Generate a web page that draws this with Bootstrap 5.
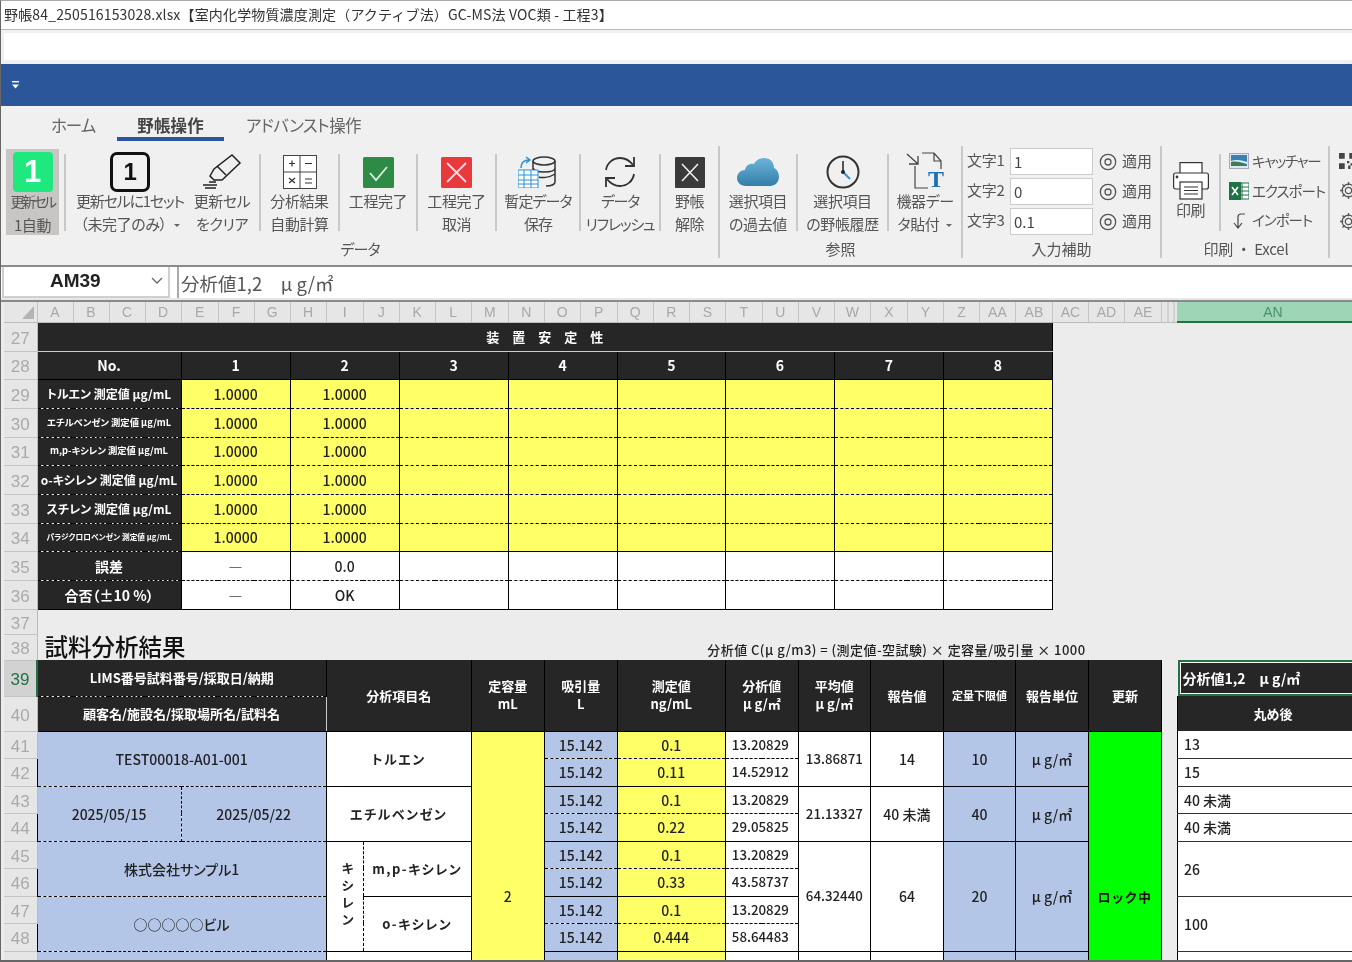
<!DOCTYPE html>
<html lang="ja">
<head>
<meta charset="utf-8">
<title>野帳</title>
<link href="https://cdn.jsdelivr.net/npm/bootstrap@5.3.0/dist/css/bootstrap.min.css" rel="stylesheet">
<style>
html,body{height:962px;overflow:hidden;background:#fff}
body{font-family:"Noto Sans CJK JP","Noto Sans",sans-serif;font-feature-settings:"palt";color:#222}
.xa{width:1352px;height:962px;overflow:hidden;border-left:1px solid #666;border-top:1px solid #aaa;border-bottom:2px solid #666;background:#ececec;filter:blur(.3px)}
.xa>*{flex:none}
.xa-title{height:29px;background:#fff;border-bottom:1px solid #bbb;font-size:14px;line-height:27px;padding-left:3px;white-space:nowrap;color:#333;font-feature-settings:normal;letter-spacing:.16px}
.xa-search{height:34px;background:#f0f0f0;padding:3px 0 3px 3px}
.xa-search div{height:27px;background:#fff;border-radius:2px}
.xa-blue{height:42px;background:#2b579a;padding-left:10px}
.xa-tabs{height:37px;background:#f0f0f0;padding-left:28px}
.xa-tabs .nav-link{height:35px;padding:7px 22px 0;font-size:16.500px;line-height:24px;color:#666;border-bottom:4px solid transparent;background:none;letter-spacing:-.6px}
.xa-tabs .nav-link.hm{letter-spacing:-1px}
.xa-tabs .nav-link.active{color:#444;font-weight:700;border-bottom-color:#2b579a;padding:7px 20px 0;letter-spacing:.2px}
.xa-rib{height:124px;background:#f0f0f0;padding:3px 0 0 5px;border-bottom:2px solid #8a8a8a;overflow:hidden;font-size:15px;color:#555}
.xa-rib>*{flex:none}
.rg-lab{height:30px;line-height:28px;font-size:15px;text-align:center;color:#555;white-space:nowrap}
.rg-lab.ka{letter-spacing:-1px;padding-right:4px}
.rg-lab.pr{font-feature-settings:normal;letter-spacing:-.2px;padding-left:2px}
.rg-sep{width:2px;height:112px;background:#c8c8c8}
.ri-sep{width:2px;height:77px;margin-top:8px;background:#c8c8c8;flex:none}
.ritem{flex:none;height:86px;margin-top:3px;display:flex;flex-direction:column;align-items:center;line-height:23px;white-space:nowrap;text-align:center;letter-spacing:-.4px}
.ritem.on{background:#c8c6c4}
.ricon{height:40px;margin-top:3px;display:flex;align-items:center;justify-content:center;flex:none;margin-bottom:-3px}
.w53{width:53px}.w128{width:128px}.w56{width:56px}.w77{width:77px}.w76{width:76px}.w82{width:82px}.w78{width:78px}.w57{width:57px}.w89{width:89px}.w72{width:72px}
.m5{margin-left:5px}.m9{margin-left:9px}
.ls1{letter-spacing:-1.200px}.ls2{letter-spacing:-1.300px}.ls3{letter-spacing:-2.600px;font-size:14px}.ls4{letter-spacing:-.9px}
.mt12{margin-top:12px}
.gr1{width:712px}.gr2{width:241px}.gr3{width:197px}.gr4{width:166px}
.caret-mini{display:inline-block;border:3px solid transparent;border-top:3px solid #666;border-bottom:0;vertical-align:middle;margin-left:7px}
.one-g{width:40px;height:40px;border-radius:4px;background:#1ee87e;color:#fff;font:700 31px/40px "Liberation Sans",sans-serif;text-align:center}
.one-k{width:40px;height:40px;border:3px solid #111;border-radius:7px;color:#111;font:700 24px/34px "Liberation Sans",sans-serif;text-align:center}
.ri3{height:89px;padding-top:2px;padding-left:4px;gap:3px}
.ri3row{height:27px;gap:3px;font-size:15px;white-space:nowrap}
.ri3row .form-control{width:83px;height:27px;padding:2px 3px;font-size:15px;border:1px solid #ccc;border-radius:0;color:#444;background:#fff;min-height:0}
.ri3lab{width:40px;letter-spacing:-.2px;padding-bottom:3px}
.ri3ap{margin-left:3px;gap:5px}
.rlist{height:89px;padding:0 0 0 8px;font-size:14.500px;white-space:nowrap;width:107px}
.rlist div{height:30px;gap:3px}
.rl1{letter-spacing:-1.300px}.rl2{letter-spacing:-1px}
.rg5{gap:12px;margin-left:9px;padding-top:7px}
.xa-fx{height:31px;background:#fff}
.nbox{width:168px;height:31px;margin-left:1px;border:2px solid #cfcfcf;border-top:0;background:#fff;font-size:19px;font-weight:700;font-family:"Liberation Sans",sans-serif;color:#222;padding-left:46px;line-height:27px;position:relative}
.fbox{margin-left:7px;flex:1;height:31px;border-left:2px solid #aaa;font-size:18.500px;line-height:33px;padding-left:2px;color:#555;white-space:nowrap;overflow:hidden}
.nchev{position:absolute;right:5px;top:10px}
.xa-gap{height:2px;background:#e8e8e8}
.xa-sheet{height:660px;overflow:hidden;border-top:2px solid #8a8a8a;padding-left:3px;position:relative}
.xt.table{width:1364px;table-layout:fixed;margin:0;border-collapse:collapse;--bs-table-bg:transparent;font-size:14px;font-weight:500;color:#222}
.xt.table>:not(caption)>*>*{padding:0;border-width:0;box-shadow:none;text-align:center;vertical-align:middle;white-space:nowrap;overflow:hidden;line-height:1;background:transparent;color:#222}
.c-rh{width:33px}.c36{width:36px}.c37{width:37px}.c-gap{width:16px}.c-an{width:190px}
.rh20{height:20px}.h29{height:29px}.h28{height:28px}.h27{height:27px}.h26{height:26px}.h25{height:25px}.h36{height:36px}.h35{height:35px}
.xt.table>thead th{background:#e6e6e6;color:#a8a8a8;font-weight:400;font-size:14px;font-family:"Liberation Sans",sans-serif;border-right:1px solid #c4c4c4;border-bottom:1px solid #bbb}
.xt.table>thead th.an{background:#9fd5b7;color:#4c8f70;border-bottom:2px solid #217346;border-right:0}
.xt.table>thead th.nar{background:repeating-linear-gradient(90deg,#e6e6e6 0 5px,#bbb 5px 6px)}
.xt.table>tbody th{background:#e6e6e6;color:#aaa;font-weight:400;font-size:17px;font-family:"Liberation Sans",sans-serif;border-right:1px solid #bbb;border-bottom:1px solid #c4c4c4;padding-top:3px;padding-left:0;vertical-align:middle}
.xt.table>tbody th.sel{background:#d2d2d2;color:#217346;border-right:2px solid #217346}
.xt.table>tbody td.dk{background:#262626;color:#fff;font-weight:700;border-left:1px solid #000;border-right:1px solid #000;border-bottom:1px solid #000}
.xt.table>tbody td.ttl{letter-spacing:13px;font-size:13px;border-bottom:1px solid #ccc;padding-left:13px}
.xt.table>tbody td.vw{border-left:1px solid #ccc}
.xt.table>tbody td.vg{border-left:1px solid #999}
.xt.table>tbody td.nb{border-left-color:#262626}
.xt.table>tbody td.no{font-size:14px}
.xt.table>tbody td.dd{border-bottom:1px dashed #000}
.xt.table>tbody td.yl{background:#ff6;border-left:1px solid #000;border-right:1px solid #000;border-bottom:1px dashed #000}
.xt.table>tbody td.wh{background:#fff;border-left:1px solid #000;border-right:1px solid #000;border-bottom:1px dashed #000}
.xt.table>tbody td.bl{background:#b4c6e7;border-left:1px solid #000;border-right:1px solid #000;border-bottom:1px dashed #000}
.xt.table>tbody td.gn{background:#0f0;border-left:1px solid #000;border-right:1px solid #000;border-bottom:1px solid #000;font-size:13px;letter-spacing:1.5px;font-weight:700;color:#111}
.xt.table>tbody td.ss{border-bottom:1px solid #000}
.xt.table>tbody td.dr{border-right:1px dashed #000}
.xt.table>tbody td.dl{border-left:1px dashed #000}
.xt.table>tbody td.an{background:#fff;text-align:left;padding-left:6px;border-left:1px solid #000;border-bottom:1px solid #333}
.xt.table>tbody td.lft{text-align:left;padding-left:6px}
.xt.table>tbody td.dsh{font-weight:700}
.f12{font-size:12px!important}.f10{font-size:9.300px!important}.f8{font-size:7.700px!important}.f11{font-size:11px!important}.f13{font-size:13px!important}.n13{font-size:13.300px!important}
.l2{line-height:18px!important}
.xt.table>tbody td.big{font-size:23.500px;font-weight:500;text-align:left;padding-left:7px;color:#111;vertical-align:bottom;padding-bottom:2px;line-height:24px;overflow:visible}
.xt.table>tbody td.frm{font-size:13px;text-align:left;padding-left:18px;vertical-align:bottom;padding-bottom:4px;letter-spacing:.45px;overflow:visible}
.xt.table>tbody td.vt{background:#fff;font-weight:700;border-left:1px solid #000;border-bottom:1px solid #000;padding-left:6px;font-size:13px}
.vtxt{writing-mode:vertical-rl;text-orientation:upright;letter-spacing:4px;display:inline-block}
.xt.table>tbody td.selc{background:#262626;color:#fff;text-align:left;padding-left:5px;box-shadow:inset 0 0 0 2px #217346,inset 0 0 0 3px #fff;font-size:14px;font-weight:700}
.xt.table>tbody td.dk2{background:#262626;color:#fff;font-weight:700;border-left:1px solid #000}
.xt.table>tbody td.kata{font-weight:700;font-size:13px;letter-spacing:1.5px}
.xa-sheet-corner{position:absolute;left:21px;top:4px}
</style>
</head>
<body>
<div class="xa d-flex flex-column">
  <div class="xa-title">野帳84_250516153028.xlsx【室内化学物質濃度測定（アクティブ法）GC-MS法 VOC類 - 工程3】</div>
  <div class="xa-search"><div></div></div>
  <div class="xa-blue d-flex align-items-center">
    <svg width="10" height="10" viewBox="0 0 10 10"><rect x="1" y="1" width="7" height="1.4" fill="#fff"/><path d="M1 4.5h7L4.5 8.5z" fill="#fff"/></svg>
  </div>
  <ul class="nav xa-tabs">
    <li class="nav-item"><a class="nav-link hm" href="#">ホーム</a></li>
    <li class="nav-item"><a class="nav-link active" href="#">野帳操作</a></li>
    <li class="nav-item"><a class="nav-link" href="#">アドバンスト操作</a></li>
  </ul>

  <div class="xa-rib d-flex">
    <div class="gr1">
      <div class="d-flex">
        <div class="ritem w53 on"><div class="ricon"><div class="one-g">1</div></div><span><span class="ls3">更新セル</span><br>1自動</span></div>
        <div class="ri-sep m5"></div>
        <div class="ritem w128"><div class="ricon"><div class="one-k">1</div></div><span><span class="ls1">更新セルに1セット</span><br>（未完了のみ）<i class="caret-mini"></i></span></div>
        <div class="ritem w56"><div class="ricon"><svg width="40" height="38" viewBox="0 0 40 38" fill="none" stroke="#222" stroke-width="1.5"><path d="M30 2l8 8-18 17H12l-4-4 4-7z"/><path d="M15 13l9 9"/><path d="M1 32h14M3 35h11M7 29h7" stroke-width="1.3"/></svg></div><span>更新セル<br>をクリア</span></div>
        <div class="ri-sep m9"></div>
        <div class="ritem w77"><div class="ricon"><svg width="34" height="34" viewBox="0 0 34 34" fill="#fff" stroke="#444"><rect x=".5" y=".5" width="33" height="33"/><path d="M17 0v34M0 17h34" fill="none"/><path d="M6 8.500h6M9 5.500v6M22 8.500h7M6 23l6 5M12 23l-6 5M22 24h7M22 28h7" fill="none" stroke="#333" stroke-width="1.2"/></svg></div><span>分析結果<br>自動計算</span></div>
        <div class="ri-sep"></div>
        <div class="ritem w76"><div class="ricon"><svg width="31" height="31" viewBox="0 0 31 31"><rect width="31" height="31" rx="1.500" fill="#2e8b45"/><path d="M7 16l6 7 11-13" fill="none" stroke="#d8f0dc" stroke-width="1.800"/></svg></div><span>工程完了</span></div>
        <div class="ri-sep"></div>
        <div class="ritem w77"><div class="ricon"><svg width="31" height="31" viewBox="0 0 31 31"><rect width="31" height="31" rx="1.500" fill="#e83a3a"/><path d="M6 6l19 19M25 6L6 25" fill="none" stroke="#fde" stroke-width="1.800"/></svg></div><span>工程完了<br>取消</span></div>
        <div class="ri-sep"></div>
        <div class="ritem w82"><div class="ricon"><svg width="40" height="32" viewBox="0 0 40 32" fill="none"><g stroke="#333" stroke-width="1.500"><ellipse cx="26" cy="5" rx="11" ry="4"/><path d="M15 5v21M37 5v21c0 2-3 4-9 4M15 12c1 3 5 4 11 4s11-1 11-4M21 21c2 1 10 1 16-3"/></g><path d="M0 14h20v18H0z" fill="#fff" stroke="#2d8fd8"/><path d="M0 19h20M0 24h20M0 28h20M6 14v18M13 14v18" stroke="#2d8fd8"/><path d="M3 12c0-5 3-8 8-8M8 1l4 3-4 3" stroke="#2d8fd8" stroke-width="1.500"/></svg></div><span class="ls4">暫定データ<br>保存</span></div>
        <div class="ri-sep"></div>
        <div class="ritem w78"><div class="ricon"><svg width="34" height="32" viewBox="0 0 34 32" fill="none" stroke="#333" stroke-width="1.800"><path d="M3 14C4 7 10 2 17 2c6 0 10 3 13 7"/><path d="M31 1v9h-9"/><path d="M31 18c-1 7-7 12-14 12-6 0-10-3-13-7"/><path d="M3 31v-9h9"/></svg></div><span class="ls2">データ<br>リフレッシュ</span></div>
        <div class="ri-sep"></div>
        <div class="ritem w57"><div class="ricon"><svg width="30" height="31" viewBox="0 0 30 31"><rect width="30" height="31" rx="1" fill="#3a3a3a"/><path d="M7 7l16 17M23 7L7 24" fill="none" stroke="#eee" stroke-width="1.600"/></svg></div><span>野帳<br>解除</span></div>
      </div>
      <div class="rg-lab ka">データ</div>
    </div>
    <div class="rg-sep"></div>
    <div class="gr2">
      <div class="d-flex">
        <div class="ritem w76"><div class="ricon"><svg width="42" height="28" viewBox="0 0 42 28"><defs><linearGradient id="cl" x1="0" y1="0" x2="0" y2="1"><stop offset="0" stop-color="#6cb3d9"/><stop offset="1" stop-color="#337fa9"/></linearGradient></defs><path d="M9 28C3 28 0 24 0 20c0-5 4-8 8-8 1-5 5-7 9-6 2-4 6-6 10-6 6 0 10 4 10 10 3 1 5 5 5 9 0 5-4 9-9 9z" fill="url(#cl)"/></svg></div><span>選択項目<br>の過去値</span></div>
        <div class="ri-sep"></div>
        <div class="ritem w89"><div class="ricon"><svg width="34" height="34" viewBox="0 0 34 34" fill="none"><circle cx="17" cy="17" r="15.500" stroke="#333" stroke-width="2"/><path d="M17 6v11" stroke="#222" stroke-width="1.500"/><path d="M17 17l7 7" stroke="#2d8fd8" stroke-width="2"/><circle cx="17" cy="17" r="2" fill="#222"/></svg></div><span>選択項目<br>の野帳履歴</span></div>
        <div class="ri-sep"></div>
        <div class="ritem w72"><div class="ricon"><svg width="38" height="40" viewBox="0 0 38 40" fill="none"><path d="M9 14v22h13M16 1h12l7 8v8M28 1v8h7" stroke="#444" stroke-width="1.200"/><path d="M1 2l11 10M12 4v8H3" stroke="#444" stroke-width="1.300"/><text x="22" y="35" font-family="Liberation Serif" font-size="24" font-weight="700" fill="#1a6fb5" stroke="none">T</text></svg></div><span>機器デー<br>タ貼付<i class="caret-mini"></i></span></div>
      </div>
      <div class="rg-lab">参照</div>
    </div>
    <div class="rg-sep"></div>
    <div class="gr3">
      <div class="ri3 d-flex flex-column">
        <div class="ri3row d-flex align-items-center"><span class="ri3lab">文字1</span><input class="form-control" readonly value="1"><span class="ri3ap d-flex align-items-center"><svg width="18" height="18" viewBox="0 0 18 18" fill="none" stroke="#555" stroke-width="1.300"><circle cx="9" cy="9" r="7.700"/><circle cx="9" cy="9" r="3"/></svg>適用</span></div>
        <div class="ri3row d-flex align-items-center"><span class="ri3lab">文字2</span><input class="form-control" readonly value="0"><span class="ri3ap d-flex align-items-center"><svg width="18" height="18" viewBox="0 0 18 18" fill="none" stroke="#555" stroke-width="1.300"><circle cx="9" cy="9" r="7.700"/><circle cx="9" cy="9" r="3"/></svg>適用</span></div>
        <div class="ri3row d-flex align-items-center"><span class="ri3lab">文字3</span><input class="form-control" readonly value="0.1"><span class="ri3ap d-flex align-items-center"><svg width="18" height="18" viewBox="0 0 18 18" fill="none" stroke="#555" stroke-width="1.300"><circle cx="9" cy="9" r="7.700"/><circle cx="9" cy="9" r="3"/></svg>適用</span></div>
      </div>
      <div class="rg-lab">入力補助</div>
    </div>
    <div class="rg-sep"></div>
    <div class="gr4">
      <div class="d-flex">
        <div class="ritem w57"><div class="ricon mt12"><svg width="36" height="38" viewBox="0 0 36 38" fill="#fff" stroke="#333" stroke-width="1.200"><rect x="7" y=".6" width="22" height="11"/><rect x=".6" y="11" width="34.800" height="16" rx="2"/><rect x="7" y="20" width="22" height="17"/><path d="M11 25h14M11 28.500h14M11 32h14" fill="none"/><circle cx="4" cy="15" r=".8" fill="#333"/></svg></div><span>印刷</span></div>
        <div class="ri-sep"></div>
        <div class="rlist d-flex flex-column">
          <div class="d-flex align-items-center"><svg width="20" height="16" viewBox="0 0 20 16"><rect x=".5" y=".5" width="19" height="15" fill="#dfe8ef" stroke="#aab"/><rect x="2" y="2" width="16" height="11" fill="#3c7fb4"/><path d="M2 13V8c5 0 10 1 16 5z" fill="#3d7f4a"/><path d="M2 8c5-2 10-1 16 1v2C12 9 7 8 2 9z" fill="#e6f0f5"/></svg><span class="rl1">キャッチャー</span></div>
          <div class="d-flex align-items-center"><svg width="20" height="20" viewBox="0 0 20 20"><rect x="8" y="2" width="12" height="16" fill="#fff" stroke="#1f7244"/><path d="M13 2v16M8 6h12M8 10h12M8 14h12" stroke="#1f7244"/><rect y="1" width="12" height="18" fill="#1f7244"/><path d="M3 6l6 8M9 6l-6 8" stroke="#fff" stroke-width="1.600"/></svg><span class="rl2">エクスポート</span></div>
          <div class="d-flex align-items-center"><svg width="20" height="18" viewBox="0 0 20 18" fill="none" stroke="#444" stroke-width="1.200"><path d="M16 3h-4c-2 0-3 1-3 3v11M5 12l4 5 4-5"/></svg><span class="rl2">インポート</span></div>
        </div>
      </div>
      <div class="rg-lab pr">印刷 ・ Excel</div>
    </div>
    <div class="rg-sep"></div>
    <div class="d-flex flex-column rg5">
      <svg width="16" height="16" viewBox="0 0 14 14" fill="#444"><path d="M0 0h5v5H0zM9 0h5v5H9zM0 9h5v5H0zM7 7h2v2H7zM10 9h4v2h-4zM8 11h2v3H8zM12 12h2v2h-2z"/></svg>
      <svg width="19" height="19" viewBox="0 0 18 18" fill="none" stroke="#555" stroke-width="1.200"><circle cx="9" cy="9" r="3"/><path d="M9 1v3M9 14v3M1 9h3M14 9h3M3.300 3.300l2.100 2.100M12.600 12.600l2.100 2.100M3.300 14.700l2.100-2.100M12.600 5.400l2.100-2.100"/><circle cx="9" cy="9" r="6"/></svg>
      <svg width="19" height="19" viewBox="0 0 18 18" fill="none" stroke="#555" stroke-width="1.200"><circle cx="9" cy="9" r="3"/><path d="M9 1v3M9 14v3M1 9h3M14 9h3M3.300 3.300l2.100 2.100M12.600 12.600l2.100 2.100M3.300 14.700l2.100-2.100M12.600 5.400l2.100-2.100"/><circle cx="9" cy="9" r="6"/></svg>
    </div>
  </div>

  <div class="xa-fx d-flex">
    <div class="nbox">AM39<svg class="nchev" width="12" height="8" viewBox="0 0 12 8" fill="none" stroke="#666" stroke-width="1.300"><path d="M1 1l5 5 5-5"/></svg></div>
    <div class="fbox">分析値1,2　μ g/㎡</div>
  </div>
  <div class="xa-gap"></div>

  <div class="xa-sheet">
    <svg class="xa-sheet-corner" width="12" height="13" viewBox="0 0 12 13"><path d="M12 0v13H0z" fill="#b4b4b4"/></svg>
    <table class="table xt">
      <colgroup><col class="c-rh"><col class="c36"><col class="c36"><col class="c36"><col class="c36"><col class="c37"><col class="c36"><col class="c36"><col class="c36"><col class="c37"><col class="c36"><col class="c36"><col class="c36"><col class="c37"><col class="c36"><col class="c36"><col class="c37"><col class="c36"><col class="c36"><col class="c36"><col class="c37"><col class="c36"><col class="c36"><col class="c36"><col class="c37"><col class="c36"><col class="c36"><col class="c36"><col class="c37"><col class="c36"><col class="c36"><col class="c37"><col class="c-gap"><col class="c-an"></colgroup>
      <thead><tr class="rh20"><th></th><th>A</th><th>B</th><th>C</th><th>D</th><th>E</th><th>F</th><th>G</th><th>H</th><th>I</th><th>J</th><th>K</th><th>L</th><th>M</th><th>N</th><th>O</th><th>P</th><th>Q</th><th>R</th><th>S</th><th>T</th><th>U</th><th>V</th><th>W</th><th>X</th><th>Y</th><th>Z</th><th>AA</th><th>AB</th><th>AC</th><th>AD</th><th>AE</th><th class="nar"></th><th class="an">AN</th></tr></thead>
      <tbody>
        <tr class="h29"><th>27</th><td class="dk ttl" colspan="28">装置安定性</td><td colspan="5"></td></tr>
        <tr class="h28"><th>28</th><td class="dk no" colspan="4">No.</td><td class="dk vw" colspan="3">1</td><td class="dk vw" colspan="3">2</td><td class="dk vg" colspan="3">3</td><td class="dk vg" colspan="3">4</td><td class="dk vg" colspan="3">5</td><td class="dk vg" colspan="3">6</td><td class="dk vg" colspan="3">7</td><td class="dk vg" colspan="3">8</td><td colspan="5"></td></tr>
        <tr class="h29"><th>29</th><td class="dk dd f12" colspan="4">トルエン 測定値 μg/mL</td><td class="yl" colspan="3">1.0000</td><td class="yl" colspan="3">1.0000</td><td class="yl" colspan="3"></td><td class="yl" colspan="3"></td><td class="yl" colspan="3"></td><td class="yl" colspan="3"></td><td class="yl" colspan="3"></td><td class="yl" colspan="3"></td><td colspan="5"></td></tr>
        <tr class="h29"><th>30</th><td class="dk dd f10" colspan="4">エチルベンゼン 測定値 μg/mL</td><td class="yl" colspan="3">1.0000</td><td class="yl" colspan="3">1.0000</td><td class="yl" colspan="3"></td><td class="yl" colspan="3"></td><td class="yl" colspan="3"></td><td class="yl" colspan="3"></td><td class="yl" colspan="3"></td><td class="yl" colspan="3"></td><td colspan="5"></td></tr>
        <tr class="h28"><th>31</th><td class="dk dd f10" colspan="4">m,p-キシレン 測定値 μg/mL</td><td class="yl" colspan="3">1.0000</td><td class="yl" colspan="3">1.0000</td><td class="yl" colspan="3"></td><td class="yl" colspan="3"></td><td class="yl" colspan="3"></td><td class="yl" colspan="3"></td><td class="yl" colspan="3"></td><td class="yl" colspan="3"></td><td colspan="5"></td></tr>
        <tr class="h29"><th>32</th><td class="dk dd f12" colspan="4">o-キシレン 測定値 μg/mL</td><td class="yl" colspan="3">1.0000</td><td class="yl" colspan="3">1.0000</td><td class="yl" colspan="3"></td><td class="yl" colspan="3"></td><td class="yl" colspan="3"></td><td class="yl" colspan="3"></td><td class="yl" colspan="3"></td><td class="yl" colspan="3"></td><td colspan="5"></td></tr>
        <tr class="h29"><th>33</th><td class="dk dd f12" colspan="4">スチレン 測定値 μg/mL</td><td class="yl" colspan="3">1.0000</td><td class="yl" colspan="3">1.0000</td><td class="yl" colspan="3"></td><td class="yl" colspan="3"></td><td class="yl" colspan="3"></td><td class="yl" colspan="3"></td><td class="yl" colspan="3"></td><td class="yl" colspan="3"></td><td colspan="5"></td></tr>
        <tr class="h28"><th>34</th><td class="dk dd f8" colspan="4">パラジクロロベンゼン 測定値 μg/mL</td><td class="yl ss" colspan="3">1.0000</td><td class="yl ss" colspan="3">1.0000</td><td class="yl ss" colspan="3"></td><td class="yl ss" colspan="3"></td><td class="yl ss" colspan="3"></td><td class="yl ss" colspan="3"></td><td class="yl ss" colspan="3"></td><td class="yl ss" colspan="3"></td><td colspan="5"></td></tr>
        <tr class="h29"><th>35</th><td class="dk dd" colspan="4">誤差</td><td class="wh dsh" colspan="3">―</td><td class="wh" colspan="3">0.0</td><td class="wh" colspan="3"></td><td class="wh" colspan="3"></td><td class="wh" colspan="3"></td><td class="wh" colspan="3"></td><td class="wh" colspan="3"></td><td class="wh" colspan="3"></td><td colspan="5"></td></tr>
        <tr class="h29"><th>36</th><td class="dk" colspan="4">合否（±10 %）</td><td class="wh ss dsh" colspan="3">―</td><td class="wh ss" colspan="3">OK</td><td class="wh ss" colspan="3"></td><td class="wh ss" colspan="3"></td><td class="wh ss" colspan="3"></td><td class="wh ss" colspan="3"></td><td class="wh ss" colspan="3"></td><td class="wh ss" colspan="3"></td><td colspan="5"></td></tr>
        <tr class="h25"><th>37</th><td colspan="33"></td></tr>
        <tr class="h25"><th>38</th><td class="big" colspan="18">試料分析結果</td><td class="frm" colspan="15">分析値 C(μ g/m3) = (測定値-空試験) × 定容量/吸引量 × 1000</td></tr>
        <tr class="h36"><th class="sel">39</th><td class="dk dd f13" colspan="8">LIMS番号試料番号/採取日/納期</td><td class="dk vw f13" colspan="4" rowspan="2">分析項目名</td><td class="dk vg f13 l2" colspan="2" rowspan="2">定容量<br>mL</td><td class="dk vw f13 l2" colspan="2" rowspan="2">吸引量<br>L</td><td class="dk nb f13 l2" colspan="3" rowspan="2">測定値<br>ng/mL</td><td class="dk nb f13 l2" colspan="2" rowspan="2">分析値<br>μ g/㎡</td><td class="dk vg f13 l2" colspan="2" rowspan="2">平均値<br>μ g/㎡</td><td class="dk vg f13" colspan="2" rowspan="2">報告値</td><td class="dk vg f11" colspan="2" rowspan="2">定量下限値</td><td class="dk vw f13" colspan="2" rowspan="2">報告単位</td><td class="dk f13" colspan="2" rowspan="2">更新</td><td></td><td class="selc">分析値1,2　μ g/㎡</td></tr>
        <tr class="h35"><th>40</th><td class="dk f13" colspan="8">顧客名/施設名/採取場所名/試料名</td><td></td><td class="dk2 f13">丸め後</td></tr>
        <tr class="h27"><th>41</th><td class="bl" colspan="8" rowspan="2">TEST00018-A01-001</td><td class="wh ss kata" colspan="4" rowspan="2">トルエン</td><td class="yl ss" colspan="2" rowspan="12">2</td><td class="bl" colspan="2">15.142</td><td class="yl" colspan="3">0.1</td><td class="wh lft n13" colspan="2">13.20829</td><td class="wh ss n13" colspan="2" rowspan="2">13.86871</td><td class="wh ss" colspan="2" rowspan="2">14</td><td class="bl ss" colspan="2" rowspan="2">10</td><td class="bl ss" colspan="2" rowspan="2">μ g/㎡</td><td class="gn" colspan="2" rowspan="12">ロック中</td><td></td><td class="an">13</td></tr>
        <tr class="h28"><th>42</th><td class="bl ss" colspan="2">15.142</td><td class="yl ss" colspan="3">0.11</td><td class="wh ss lft n13" colspan="2">14.52912</td><td></td><td class="an">15</td></tr>
        <tr class="h27"><th>43</th><td class="bl dr" colspan="4" rowspan="2">2025/05/15</td><td class="bl dl" colspan="4" rowspan="2">2025/05/22</td><td class="wh ss kata" colspan="4" rowspan="2">エチルベンゼン</td><td class="bl" colspan="2">15.142</td><td class="yl" colspan="3">0.1</td><td class="wh lft n13" colspan="2">13.20829</td><td class="wh ss n13" colspan="2" rowspan="2">21.13327</td><td class="wh ss" colspan="2" rowspan="2">40 未満</td><td class="bl ss" colspan="2" rowspan="2">40</td><td class="bl ss" colspan="2" rowspan="2">μ g/㎡</td><td></td><td class="an">40 未満</td></tr>
        <tr class="h28"><th>44</th><td class="bl ss" colspan="2">15.142</td><td class="yl ss" colspan="3">0.22</td><td class="wh ss lft n13" colspan="2">29.05825</td><td></td><td class="an">40 未満</td></tr>
        <tr class="h27"><th>45</th><td class="bl" colspan="8" rowspan="2">株式会社サンプル1</td><td class="vt dr" rowspan="4"><span class="vtxt">キシレン</span></td><td class="wh ss kata dl" colspan="3" rowspan="2">m,p-キシレン</td><td class="bl" colspan="2">15.142</td><td class="yl" colspan="3">0.1</td><td class="wh lft n13" colspan="2">13.20829</td><td class="wh ss n13" colspan="2" rowspan="4">64.32440</td><td class="wh ss" colspan="2" rowspan="4">64</td><td class="bl ss" colspan="2" rowspan="4">20</td><td class="bl ss" colspan="2" rowspan="4">μ g/㎡</td><td></td><td class="an" rowspan="2">26</td></tr>
        <tr class="h28"><th>46</th><td class="bl ss" colspan="2">15.142</td><td class="yl ss" colspan="3">0.33</td><td class="wh ss lft n13" colspan="2">43.58737</td><td></td></tr>
        <tr class="h27"><th>47</th><td class="bl" colspan="8" rowspan="2">○○○○○ビル</td><td class="wh ss kata dl" colspan="3" rowspan="2">o-キシレン</td><td class="bl" colspan="2">15.142</td><td class="yl" colspan="3">0.1</td><td class="wh lft n13" colspan="2">13.20829</td><td></td><td class="an" rowspan="2">100</td></tr>
        <tr class="h28"><th>48</th><td class="bl ss" colspan="2">15.142</td><td class="yl ss" colspan="3">0.444</td><td class="wh ss lft n13" colspan="2">58.64483</td><td></td></tr>
        <tr class="h27"><th></th><td class="bl" colspan="8" rowspan="4"></td><td class="wh ss" colspan="4" rowspan="4"></td><td class="bl" colspan="2" rowspan="4"></td><td class="yl" colspan="3" rowspan="4"></td><td class="wh" colspan="2" rowspan="4"></td><td class="wh" colspan="2" rowspan="4"></td><td class="wh" colspan="2" rowspan="4"></td><td class="bl" colspan="2" rowspan="4"></td><td class="bl" colspan="2" rowspan="4"></td><td rowspan="4"></td><td class="an" rowspan="4"></td></tr>
        <tr class="h28"><th></th></tr>
        <tr class="h27"><th></th></tr>
        <tr class="h28"><th></th></tr>
      </tbody>
    </table>
  </div>
</div>
</body>
</html>
